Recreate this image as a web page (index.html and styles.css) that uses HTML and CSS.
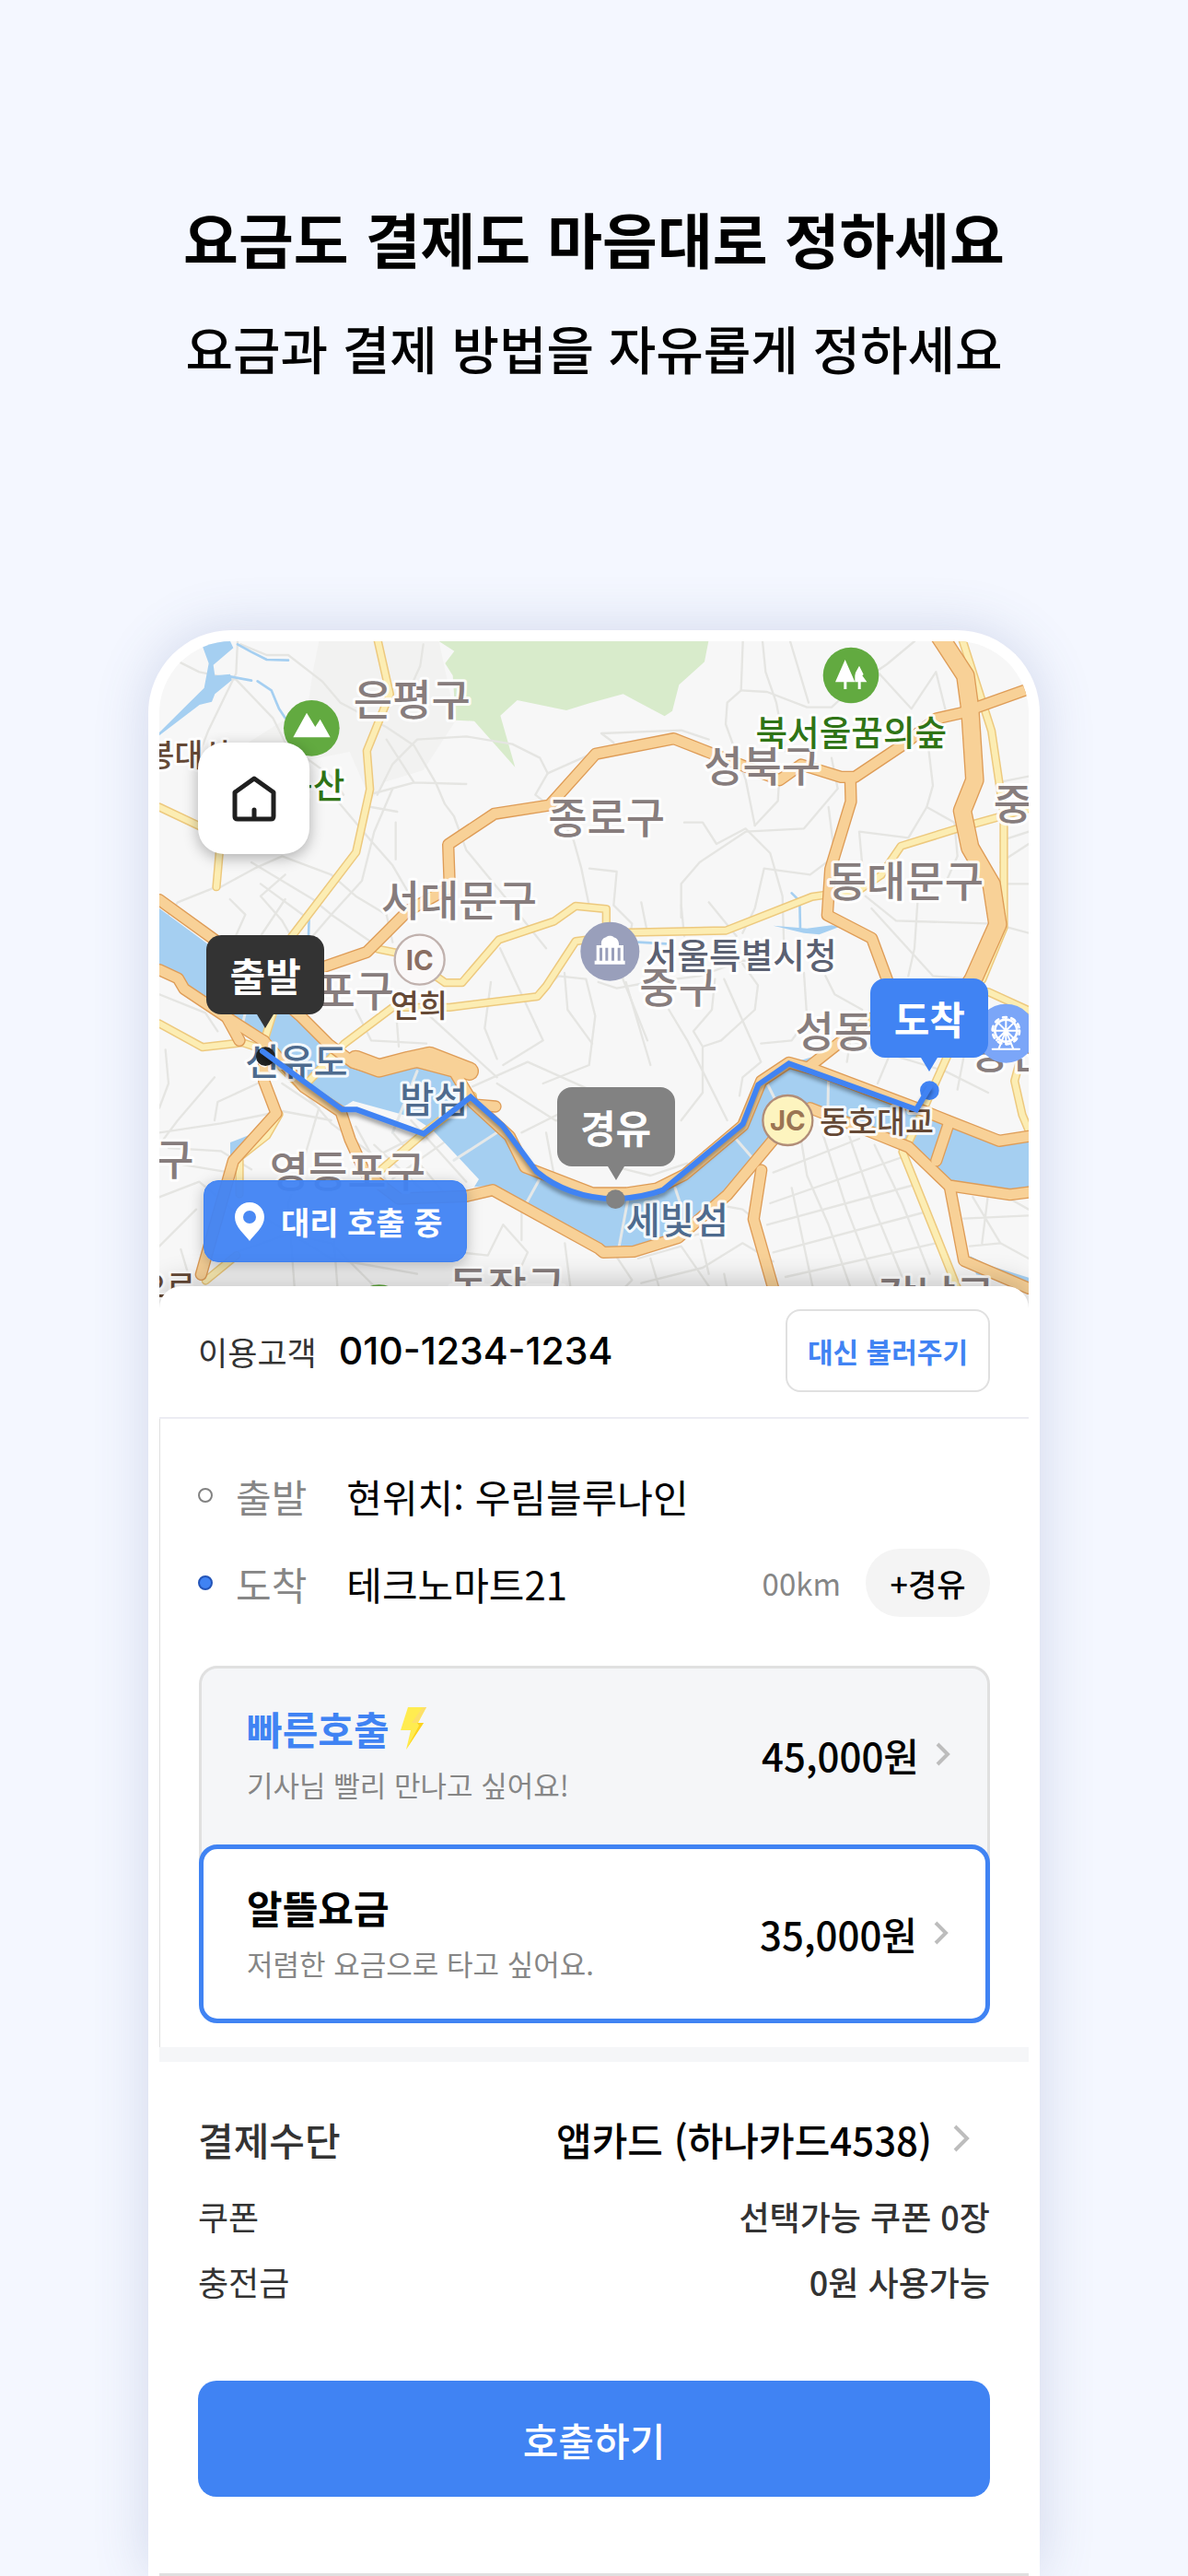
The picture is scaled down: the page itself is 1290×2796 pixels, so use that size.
FILE: index.html
```html
<!DOCTYPE html>
<html lang="ko">
<head>
    <meta charset="UTF-8">
    <meta name="viewport" content="width=device-width, initial-scale=1.0">
    <title>대리 호출</title>
    <link rel="stylesheet" href="styles.css">
</head>
<body>
    <header class="intro">
        <h1>요금도 결제도 마음대로 정하세요</h1>
        <p>요금과 결제 방법을 자유롭게 정하세요</p>
    </header>

    <main class="phone">
        <!-- Map -->
        <section class="map">
            <svg class="map-canvas" viewBox="0 0 2832 2172" preserveAspectRatio="xMidYMin slice" aria-hidden="true">
                <defs>
                    <!-- Local roads -->
                    <g id="roads">
                        <path d="M711-5 751 172 676 357 686 482 641 687 431 962 380 1180 345 1290"/>
                        <path d="M0 540 131 602 200 640 186 800"/>
                        <path d="M711 1002 800 1020 931 1112 986 1112 1106 972 1286 912 1356 862 1456 872V950L1846 942 2126 832 2280 810 2351 762 2416 667 2600 610 2832 545"/>
                        <path d="M1431 967 1356 977 1261 1122 1231 1157 946 1192 761 1192 601 1312 480 1440"/>
                        <path d="M2616-5 2711 292 2751 562V932L2681 1102"/>
                        <path d="M2571 1342 2441 1632 2421 1662 2601 2110"/>
                        <path d="M1021 1480 861 1602 700 1740"/>
                        <path d="M0 1245 141 1322 271 1307 341 1330 461 1450"/>
                        <path d="M2701 1142 2832 1202M2832 1592 2811 1542 2786 1432 2800 1380"/>
                        <path d="M261 1690V1800M151 2082 251 2000M260 1680 350 1610 390 1540"/>
                    </g>
                    <!-- Expressways -->
                    <g id="express">
                        <path d="M440 1100 531 1062 676 1012 811 877 946 802 941 662 1091 562 1271 534 1421 367 1676 317 1791 362 2021 452 2091 402 2221 442H2266L2431 332 2531 252 2611 234 2832 155"/>
                        <path d="M2251 447 2253 522 2186 742 2176 892 2321 967 2371 1102 2400 1190 2311 1232 2121 1382"/>
                        <path d="M0 842 180 972 300 1080 461 1222 551 1312 631 1372 716 1397 811 1362 961 1402 1021 1502 1141 1612 1191 1712 1411 1797H1521L1621 1782 1711 1737 1901 1577 1961 1432 2051 1372 2141 1397 2471 1522 2571 1562 2736 1627 2832 1612"/>
                        <path d="M0 1070 61 1098 81 1132 231 1232 341 1302 471 1452 591 1532 621 1622 671 1732 780 1815 1001 1807 1086 1787 1431 1977 1446 1990 1546 1987 1691 1942 1851 1802 2001 1622 2120 1520 2341 1607 2441 1647 2571 1772 2771 1802 2832 1794"/>
                        <path d="M341 1302V1432L381 1537 241 1692 136 2062M220 1225 261 1300M1040 1510 1095 1515"/>
                        <path d="M1961 1722 1936 1882 2001 2110M2571 1572 2531 1692M2576 1782 2621 2017 2832 2107"/>
                    </g>
                    <g id="trunk">
                        <path d="M2541-18 2626 112 2641 222 2656 452 2616 552 2641 672 2711 792 2731 922 2651 1102 2590 1200"/>
                    </g>
                </defs>

                <rect width="2832" height="2172" fill="#f7f7f7"/>
                <path class="hill" d="M520 0H911L966 257 860 420 730 460 690 520 620 360 420 400 290 330 400 260 480 240 500 100Z"/>
                <path class="forest" d="M911 0 961 32 931 72 956 112 966 257 1026 260 1159 410 1111 242 1166 192 1326 225 1401 202 1511 172 1646 244 1671 227 1693 142 1776 67 1789 0Z"/>

                <!-- Side streets -->
                <g class="street">
                    <path d="M255 0 250 105 160 290 125 380M70 70 130 100 250 125 370 250 410 330 560 440 600 500"/>
                    <path d="M265 10 350 45 420 45 530 130 590 200 740 280 830 340 900 460 930 530 960 570 1000 680 1140 850 1260 1000"/>
                    <path d="M860 10 850 80 800 190M710 500 760 400 840 320 1000 310 1150 335 1240 380 1265 430 1225 500 1300 560 1350 650 1375 740 1400 860"/>
                    <path d="M740 320 830 460 1000 465M1265 430 1400 370M700 495 830 460"/>
                    <path d="M580 520 690 650 760 730 830 850M770 590 770 710M690 540 775 555M760 480 700 620 660 780 560 890 500 960"/>
                    <path d="M200 800 310 740 400 700 560 760 640 830 740 890 760 980M300 720 500 840 560 890 720 1000M330 790 480 900M410 840 330 960"/>
                    <path d="M186 800 60 850 0 930M230 840 280 890 240 980M410 760 330 830 400 910 440 980"/>
                    <path d="M1480 330 1440 300 1700 290 1790 320M1901 0 1895 160 1850 200 1845 270 1910 450 1940 600"/>
                    <path d="M1965 0 1975 100 2010 200 2040 360M2055 0 2115 200M1895 160 1980 165 2110 215 2190 215 2260 150 2370 75 2460 0"/>
                    <path d="M2340 100 2450 220 2530 100 2560 220M2190 380 2210 480 2100 610 1910 620 1760 720 1700 790 1700 900"/>
                    <path d="M1710 590 1770 590 1815 660 1910 610 1990 690 2030 830 2035 1000M1940 600 2015 520 2020 440"/>
                    <path d="M2180 540 2200 700 2120 760 1970 740 1940 870 1900 950M2500 300 2520 470 2500 540 2440 640 2280 620 2290 730"/>
                    <path d="M2500 540 2590 590 2600 700 2560 790M2730 460 2832 440M2740 650 2832 620M2740 720 2832 660M2750 790 2832 790"/>
                    <path d="M2300 830 2400 910 2720 920 2832 950M2320 870 2520 1090 2650 1100M2470 850 2460 1000 2440 1090"/>
                    <path d="M1401 740 1490 750 1480 860 1540 920 1510 1100 1590 1300M1570 850 1590 950M1700 860 1710 960M1790 850 1880 960"/>
                    <path d="M1430 1110 1490 1130 1600 1110 1760 1090 1900 1040 2010 1050M1520 1110 1600 1380M1660 1200 1720 1300 1850 1560"/>
                    <path d="M1900 1050 1950 1120 1940 1200 1830 1300 1770 1320 1740 1270 1800 1200 1810 1100M1770 1320 1770 1470 1700 1560"/>
                    <path d="M1840 1100 1960 1370 1900 1420 1890 1480M1960 1310 2060 1300 2110 1230 2100 1080M2170 1090 2200 1150 2290 1200"/>
                    <path d="M2200 1280 2330 1330 2560 1400 2700 1470M2420 1250 2340 1440M2260 1240 2240 1370M2650 1200 2600 1460"/>
                    <path d="M880 1220 1100 1420M1110 1000 1250 1300 1120 1380M1080 1110 1060 1260 1100 1360M1231 1157 1300 1090 1390 1100 1420 1220 1400 1380 1250 1440"/>
                    <path d="M640 1200 690 1300 870 1310M770 1190 780 1320M1320 1080 1330 1200 1410 1310M1020 1450 1200 1370 1401 1460"/>
                    <path d="M1100 1440 1290 1560 1420 1580M1180 1600 1320 1530 1401 1520M1290 1760 1260 1600"/>
                    <path d="M0 1150 150 1210 190 1270M20 1330 30 1440 0 1520M0 1600 200 1570 400 1530 560 1560M180 1420 60 1560 0 1640"/>
                    <path d="M180 1560 190 1500 320 1440M400 1440 520 1520 470 1690 420 1830M440 1430 560 1570 720 1690"/>
                    <path d="M30 1650 200 1660 300 1720M50 1700 230 1730M0 1810 130 1760 250 1860M0 1970 120 1850M70 1980 100 2080"/>
                    <path d="M640 1580 740 1760M700 1640 860 1790M760 1600 940 1810M820 1560 1000 1760M680 1690 860 1600M760 1750 930 1630"/>
                    <path d="M250 1990 420 1930 560 1960 700 2100M420 1830 440 2100M560 1830 580 2100M330 1870 560 2010 840 2060"/>
                    <path d="M980 1990 1070 2000 1120 1900 1200 1990 1150 2100M1321 1960 1340 2110M1180 1860 1180 1950"/>
                    <path d="M1401 1690 1600 1740 1720 1700M1480 1990 1540 2080 1510 2110M1560 2010 1700 1970 1790 2100M1630 1960 1760 1930 1790 2060"/>
                    <path d="M1570 2090 1770 2040 1900 1960 2000 2020M1790 1830 1900 1850 1950 1890M1600 2010 1630 2110M1840 2060 1850 2110"/>
                    <path d="M2000 1730 2280 1620M1990 1830 2420 1680M1980 1900 2460 1770M2000 1990 2490 1860M2040 2070 2530 1960"/>
                    <path d="M2090 1620 2110 1740 2180 1900 2250 2100M2160 1600 2240 1850 2340 2110M2240 1590 2330 1850 2420 2070M2330 1640 2420 1830 2510 2060"/>
                    <path d="M2060 1780 2130 2110M2620 1880 2832 1870M2650 1810 2740 1960 2832 2010M2760 1810 2832 1850M2640 1970 2740 1960M2700 1800 2680 1960"/>
                </g>

                <!-- Water -->
                <g class="water">
                    <path d="M141 17 171 0H231L241 22 176 77 181 112 231 107 236 127 181 172 171 197 131 207 0 307V297L146 152 161 72Z"/>
                    <path d="M0 870 150 980 450 1218 531 1292 631 1362 711 1402 811 1372 961 1407 1021 1482 1131 1622 1201 1712 1431 1802 1521 1802 1621 1782 1901 1572 1961 1432 2051 1377 2130 1352 2141 1392 2461 1532 2571 1562 2741 1632 2832 1622V1792L2771 1797 2581 1772 2451 1652 2341 1602 2131 1532 2001 1632 1851 1822 1691 1942 1546 1987 1446 1992 1431 1972 1086 1772 1026 1777 1041 1752 891 1592 831 1552 631 1497 591 1522 471 1432 346 1292 211 1232 91 1162 0 1062Z"/>
                    <path d="M231 1632 300 1605 380 1530 330 1420 350 1420 400 1540 231 1700Z"/>
                    <path d="M2641 2002 2701 2032 2832 2072V2100L2661 2062Z"/>
                    <path d="M2000 926 2110 935 2190 925 2215 930 2150 955 2100 950Z"/>
                </g>
                <g class="stream">
                    <path d="M231 115 300 128M255 10 300 35 350 60 420 62M320 130 365 160 390 220 410 250"/>
                    <path d="M488 900 486 960M2086 850 2088 940M1560 980 1650 985M2060 820 2090 850"/>
                </g>
                <path class="bridge" d="M840 1400 760 1600M1100 1600 960 1690M1245 1740 1190 1840M1530 1800 1496 1980M1680 1780 1700 1840M1860 1600 1930 1680M2180 1400 2178 1520M1980 1440 2010 1500M280 1210 260 1290"/>

                <!-- Each road is drawn twice: edge, then fill -->
                <use href="#roads" class="road-edge"/>
                <use href="#roads" class="road-fill"/>
                <use href="#express" class="express-edge"/>
                <path class="bank-edge" d="M640 1362 716 1390 811 1365 880 1350 1010 1400"/>
                <use href="#trunk" class="trunk-edge"/>
                <use href="#express" class="express-fill"/>
                <path class="bank-fill" d="M640 1362 716 1390 811 1365 880 1350 1010 1400"/>
                <use href="#trunk" class="trunk-fill"/>

                <!-- Place names -->
                <g class="district">
                    <text x="823" y="240">은평구</text>
                    <text x="1457" y="625">종로구</text>
                    <text x="976" y="895">서대문구</text>
                    <text x="1964" y="455">성북구</text>
                    <text x="2431" y="830">동대문구</text>
                    <text x="2908" y="578">중랑구</text>
                    <text x="1691" y="1177">중구</text>
                    <text x="2262" y="1320">성동구</text>
                    <text x="575" y="1187">마포구</text>
                    <text x="613" y="1777">영등포구</text>
                    <text x="-78" y="1737">양천구</text>
                    <text x="1133" y="2150">동작구</text>
                    <text x="2531" y="2180">강남구</text>
                    <text x="2832" y="1390">광진구</text>
                </g>
                <g class="river-name">
                    <text x="447" y="1413">선유도</text>
                    <text x="895" y="1535">밤섬</text>
                    <text x="1687" y="1928">세빛섬</text>
                </g>
                <g class="park-name">
                    <text x="2254" y="340">북서울꿈의숲</text>
                    <text x="500" y="510">봉산</text>
                </g>
                <g class="junction-name">
                    <text x="96" y="408">봉대산</text>
                    <text x="846" y="1225">연희</text>
                    <text x="2337" y="1602">동호대교</text>
                    <text x="24" y="2138">으르</text>
                </g>
                <text class="office-name" x="1895" y="1064">서울특별시청</text>

                <!-- Place markers -->
                <circle cx="496" cy="283" r="91" fill="#62aa40"/>
                <path d="M436 313 480 233 508 279 524 254 557 313Z" fill="#fff"/>
                <circle cx="2253" cy="111" r="91" fill="#62aa40"/>
                <path d="M2234 60 2266 133H2239V156H2230V133H2202ZM2280 80 2294 108 2290 112 2305 133H2285V156H2276V133H2266V112L2268 102Z" fill="#fff"/>
                <circle cx="716" cy="2185" r="90" fill="#62aa40"/>
                <circle cx="1468" cy="1010" r="96" fill="#999fbb"/>
                <path d="M1440 990C1438 974 1446 966 1456 964 1458 958 1478 958 1480 964 1492 967 1498 976 1497 990H1512V1040H1517V1052H1418V1040H1424V990ZM1434 1040H1443V998H1434ZM1453 1040H1462V998H1453ZM1473 1040H1482V998H1473ZM1493 1040H1502V998H1493Z" fill="#fff" fill-rule="evenodd"/>
                <circle cx="2758" cy="1277" r="96" fill="#7ba6f8"/>
                <g fill="none" stroke="#fff" stroke-width="8">
                    <circle cx="2758" cy="1268" r="36"/>
                    <circle cx="2758" cy="1268" r="44" stroke-dasharray="12 16"/>
                    <path d="M2758 1224V1312M2714 1268H2802M2727 1237 2789 1299M2789 1237 2727 1299M2758 1268 2734 1328M2758 1268 2782 1328M2714 1328H2802" stroke-width="6"/>
                </g>
                <circle cx="848" cy="1037" r="81" fill="#faf8f8" stroke="#c0b1ad" stroke-width="7"/>
                <text class="badge-text" x="848" y="1070" fill="#8a6e62">IC</text>
                <circle cx="2047" cy="1560" r="81" fill="#fdf4bf" stroke="#b18d78" stroke-width="7"/>
                <text class="badge-text" x="2047" y="1593" fill="#9b7553">JC</text>

                <!-- Route -->
                <circle cx="346" cy="1352" r="31" fill="#222"/>
                <circle cx="2509" cy="1463" r="31" fill="#4083f3"/>
                <path class="route" d="M336 1335 596 1525H643L861 1604 1014 1484 1118 1577 1229 1727Q1330 1812 1486 1817 1580 1810 1641 1787L1901 1572 1951 1444 2051 1375 2466 1525 2509 1452"/>
                <circle cx="1486" cy="1817" r="31" fill="#828282"/>
            </svg>

            <button type="button" class="home-btn" aria-label="홈">
                <svg viewBox="0 0 50 50" width="50" height="50" fill="none" stroke="#1f1f1f" stroke-width="5" stroke-linecap="round" stroke-linejoin="round">
                    <path d="M25 3 46 18V44Q46 47 43 47H7Q4 47 4 44V18ZM25 37V46"/>
                </svg>
            </button>
            <span class="pin pin-start">출발</span>
            <span class="pin pin-via">경유</span>
            <span class="pin pin-end">도착</span>
            <div class="status">
                <svg viewBox="0 0 32 42" width="32" height="42" fill="#fff">
                    <path d="M16 0C7 0 0 7 0 16 0 27 11 35 16 42 21 35 32 27 32 16 32 7 25 0 16 0ZM16 9A7 7 0 1 1 16 23 7 7 0 1 1 16 9Z" fill-rule="evenodd"/>
                </svg>
                대리 호출 중
            </div>
        </section>

        <div class="sheet">
            <!-- Customer -->
            <section class="customer">
                <span class="customer-label">이용고객</span>
                <span class="customer-phone">010-1234-1234</span>
                <button type="button" class="proxy-btn">대신 불러주기</button>
            </section>

            <!-- Trip -->
            <section class="trip">
                <div class="stop">
                    <span class="dot"></span>
                    <span class="stop-label">출발</span>
                    <span class="stop-name">현위치: 우림블루나인</span>
                </div>
                <div class="stop">
                    <span class="dot dot-end"></span>
                    <span class="stop-label">도착</span>
                    <span class="stop-name">테크노마트21</span>
                    <span class="distance">00km</span>
                    <button type="button" class="via-btn">+경유</button>
                </div>
            </section>

            <!-- Fares -->
            <section class="fares">
                <button type="button" class="fare">
                    <span class="fare-text">
                        <span class="fare-title fast">빠른호출
                            <svg viewBox="0 0 28 46" width="28" height="46">
                                <path d="M8 0H28L19 17H25L6 46 11 25H0Z" fill="#ffec50"/>
                                <path d="M24 0H28L18 17H12Z" fill="#fddf6b"/>
                                <path d="M18 17H25L6 46 20 20Z" fill="#fdd31f"/>
                            </svg>
                        </span>
                        <span class="fare-note">기사님 빨리 만나고 싶어요!</span>
                    </span>
                    <span class="price">45,000원</span>
                    <svg class="chevron" viewBox="0 0 16 28" width="16" height="28"><path d="M2 3 13 14 2 25"/></svg>
                </button>
                <button type="button" class="fare selected">
                    <span class="fare-text">
                        <span class="fare-title">알뜰요금</span>
                        <span class="fare-note">저렴한 요금으로 타고 싶어요.</span>
                    </span>
                    <span class="price">35,000원</span>
                    <svg class="chevron" viewBox="0 0 16 28" width="16" height="28"><path d="M2 3 13 14 2 25"/></svg>
                </button>
            </section>

            <!-- Payment -->
            <section class="payment">
                <a href="#" class="pay-row pay-method">
                    <span class="pay-label">결제수단</span>
                    <span class="pay-card">앱카드 (하나카드4538)</span>
                    <svg class="chevron" viewBox="0 0 18 32" width="18" height="32"><path d="M2 3 15 16 2 29"/></svg>
                </a>
                <div class="pay-row">
                    <span>쿠폰</span>
                    <span class="pay-value">선택가능 쿠폰 0장</span>
                </div>
                <div class="pay-row">
                    <span>충전금</span>
                    <span class="pay-value">0원 사용가능</span>
                </div>
                <button type="button" class="call-btn">호출하기</button>
            </section>
        </div>
    </main>
</body>
</html>
```

FILE: styles.css
```css
* {
    box-sizing: border-box;
}
body {
    margin: 0;
    background: #f4f7ff;
    color: #000;
    font-family: "Noto Sans CJK KR", "Noto Sans", sans-serif;
}
button {
    margin: 0;
    padding: 0;
    border: none;
    background: none;
    color: inherit;
    font-family: inherit;
    cursor: pointer;
}

/* Intro */
.intro {
    padding: 213px 0 267px;
    text-align: center;
}
.intro h1 {
    margin: 0 0 34px;
    font-size: 65px;
    line-height: 90px;
    font-weight: 700;
}
.intro p {
    margin: 0;
    font-size: 56px;
    line-height: 80px;
    font-weight: 500;
}

/* Phone */
.phone {
    margin: 0 161px;
    border: 12px solid #fff;
    border-bottom: none;
    border-radius: 90px 90px 0 0;
    background: #fff;
    box-shadow: 0 0 60px rgba(70, 90, 150, 0.2);
}

/* Map */
.map {
    position: relative;
    overflow: hidden;
    border-radius: 78px 78px 0 0;
}
.map-canvas {
    display: block;
    width: 100%;
    stroke-linejoin: round;
    stroke-linecap: round;
}
.hill {
    fill: #f2f2f1;
}
.forest {
    fill: #d8ebcb;
}
.street {
    fill: none;
    stroke: #e5e5e2;
    stroke-width: 7;
}
.water {
    fill: #a5cff1;
}
.stream {
    fill: none;
    stroke: #a5cff1;
    stroke-width: 8;
}
.bridge {
    stroke: #e5e8e8;
    stroke-width: 9;
}
.road-edge {
    fill: none;
    stroke: #edc97e;
    stroke-width: 28;
}
.road-fill {
    fill: none;
    stroke: #fcedb3;
    stroke-width: 19;
}
.express-edge {
    fill: none;
    stroke: #de9c57;
    stroke-width: 40;
}
.express-fill {
    fill: none;
    stroke: #f8d197;
    stroke-width: 32;
}
.trunk-edge, .bank-edge {
    fill: none;
    stroke: #de9c57;
    stroke-width: 62;
}
.trunk-fill, .bank-fill {
    fill: none;
    stroke: #f8d197;
    stroke-width: 54;
}
.district, .river-name, .park-name, .junction-name, .office-name, .badge-text {
    text-anchor: middle;
    font-weight: 500;
    paint-order: stroke;
    stroke: rgba(255, 255, 255, 0.9);
    stroke-width: 18;
}
.district {
    fill: #877d7d;
    font-size: 138px;
}
.river-name {
    fill: #4e6b8e;
    font-size: 121px;
}
.park-name {
    fill: #2f7416;
    font-size: 113px;
}
.junction-name {
    fill: #654936;
    font-size: 101px;
}
.office-name {
    fill: #5b6172;
    font-size: 113px;
}
.badge-text {
    stroke: none;
    font-family: Inter, sans-serif;
    font-size: 88px;
    font-weight: 700;
}
.route {
    fill: none;
    stroke: #4083f3;
    stroke-width: 18;
    stroke-linejoin: miter;
    filter: drop-shadow(0 12px 6px rgba(0, 0, 0, 0.35));
}
.home-btn {
    position: absolute;
    top: 110px;
    left: 42px;
    display: flex;
    align-items: center;
    justify-content: center;
    width: 121px;
    height: 121px;
    border-radius: 28px;
    background: #fff;
    box-shadow: 0 4px 16px rgba(0, 0, 0, 0.3);
}
.pin {
    position: absolute;
    width: 128px;
    margin-top: -14px;
    border-radius: 16px;
    color: #fff;
    font-size: 42px;
    line-height: 86px;
    font-weight: 700;
    text-align: center;
    transform: translate(-50%, -100%);
}
.pin::after {
    content: "";
    position: absolute;
    top: 100%;
    left: 50%;
    margin-left: -9px;
    border: 9px solid transparent;
    border-top: 15px solid;
    border-bottom: none;
}
.pin-start {
    top: 57.9%;
    left: 12.2%;
    background: #333;
}
.pin-start::after {
    border-top-color: #333;
}
.pin-via {
    top: 80.7%;
    left: 52.5%;
    background: #828282;
}
.pin-via::after {
    border-top-color: #828282;
}
.pin-end {
    top: 64.4%;
    left: 88.6%;
    background: #4083f3;
}
.pin-end::after {
    border-top-color: #4083f3;
}
.status {
    position: absolute;
    bottom: 50px;
    left: 48px;
    display: flex;
    align-items: center;
    gap: 18px;
    height: 89px;
    padding: 0 26px 0 33px;
    border: 1px solid #4083f3;
    border-radius: 16px;
    background: rgba(64, 131, 243, 0.95);
    box-shadow: 0 4px 16px rgba(0, 0, 0, 0.25);
    color: #fff;
    font-size: 34px;
    font-weight: 700;
}

/* Sheet */
.sheet {
    position: relative;
    margin-top: -24px;
    border-bottom: 3px solid #e0e0e0;
    border-radius: 24px 24px 0 0;
    background: #fff;
    box-shadow: 0 -6px 30px rgba(0, 0, 0, 0.2);
    clip-path: inset(-60px 0 0 0);
}
.customer {
    display: flex;
    align-items: center;
    height: 144px;
    padding: 0 42px 2px;
    border-bottom: 2px solid #ececf3;
}
.customer-label {
    color: #333;
    font-size: 35px;
}
.customer-phone {
    margin-left: 24px;
    font-family: Inter, sans-serif;
    font-size: 41px;
    font-weight: 500;
}
.proxy-btn {
    width: 222px;
    height: 90px;
    margin-left: auto;
    border: 2px solid #e0e0e0;
    border-radius: 16px;
    color: #4083f3;
    font-size: 30px;
    font-weight: 700;
}
.trip {
    padding: 46px 42px 53px 41px;
    border-left: 1px solid #e0e0e0;
}
.stop {
    display: flex;
    align-items: center;
    height: 74px;
    margin-bottom: 21px;
    font-size: 42px;
}
.stop:last-child {
    margin-bottom: 0;
}
.dot {
    width: 16px;
    height: 16px;
    border: 2px solid #828282;
    border-radius: 50%;
}
.dot-end {
    border-color: #2354b8;
    background: #4083f3;
}
.stop-label {
    margin-left: 25px;
    color: #868686;
}
.stop-name {
    margin-left: 43px;
}
.distance {
    margin-left: auto;
    color: #868686;
    font-size: 33px;
}
.via-btn {
    width: 135px;
    height: 74px;
    margin-left: 27px;
    border-radius: 37px;
    background: #f4f4f4;
    font-size: 34px;
    font-weight: 500;
}

/* Fares */
.fares {
    padding: 0 42px 26px;
    border-left: 1px solid #e0e0e0;
}
.fare {
    display: flex;
    align-items: center;
    width: 100%;
    height: 214px;
    padding: 0 40px 22px 49px;
    border: 3px solid #e0e0e0;
    border-radius: 20px 20px 0 0;
    background: #f5f6f8;
    text-align: left;
}
.fare.selected {
    position: relative;
    height: 194px;
    margin-top: -20px;
    padding: 0 40px 2px 47px;
    border: 5px solid #4083f3;
    border-radius: 20px;
    background: #fff;
}
.fare-text {
    flex: 1;
    display: flex;
    flex-direction: column;
    gap: 10px;
}
.fare-title {
    display: flex;
    align-items: center;
    gap: 12px;
    font-size: 42px;
    line-height: 56px;
    font-weight: 700;
}
.fast {
    color: #4083f3;
}
.fare-note {
    color: #868686;
    font-size: 31px;
    line-height: 46px;
}
.price {
    margin-right: 18px;
    font-size: 42px;
    font-weight: 500;
}
.chevron {
    fill: none;
    stroke: #bdbdbd;
    stroke-width: 4;
}

/* Payment */
.payment {
    padding: 43px 42px 83px;
    border-top: 16px solid #f5f6f8;
}
.pay-row {
    display: flex;
    align-items: center;
    justify-content: space-between;
    height: 71px;
    color: #333;
    font-size: 36px;
    text-decoration: none;
}
.pay-method {
    height: 80px;
    margin-bottom: 8px;
    padding-right: 22px;
    font-size: 42px;
    font-weight: 500;
}
.pay-card {
    margin-left: auto;
    margin-right: 23px;
    color: #000;
}
.pay-value {
    font-weight: 500;
}
.call-btn {
    display: block;
    width: 100%;
    height: 126px;
    margin-top: 73px;
    border-radius: 20px;
    background: #4083f3;
    color: #fff;
    font-size: 42px;
    font-weight: 500;
}
```
